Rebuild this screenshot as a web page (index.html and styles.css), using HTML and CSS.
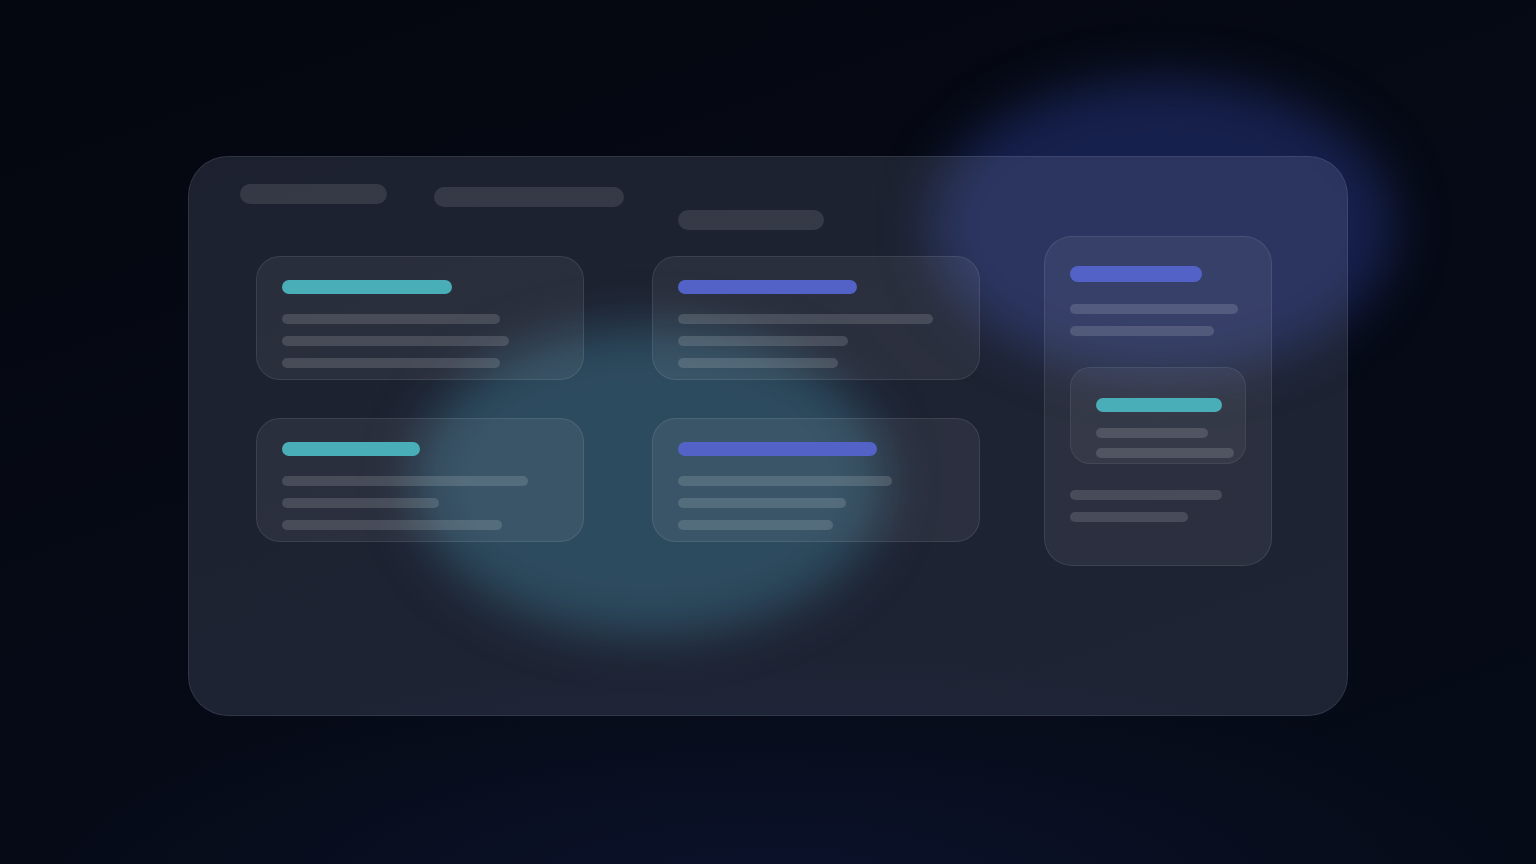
FILE: index.html
```html
<!DOCTYPE html>
<html lang="en">
<head>
<meta charset="utf-8">
<title>Dashboard skeleton</title>
<link rel="stylesheet" href="styles.css">
</head>
<body>
<main class="stage">
  <div class="blob blob-blue"></div>
  <div class="blob blob-teal"></div>
  <section class="panel">
    <header class="header">
      <span class="pill pill-a"></span>
      <span class="pill pill-b"></span>
      <span class="pill pill-c"></span>
    </header>
    <div class="body">
      <div class="grid">
        <article class="card">
          <span class="accent teal" style="width:170px"></span>
          <span class="line" style="width:218px"></span>
          <span class="line" style="width:227px"></span>
          <span class="line" style="width:218px"></span>
        </article>
        <article class="card">
          <span class="accent blue" style="width:179px"></span>
          <span class="line" style="width:255px"></span>
          <span class="line" style="width:170px"></span>
          <span class="line" style="width:160px"></span>
        </article>
        <article class="card">
          <span class="accent teal" style="width:138px"></span>
          <span class="line" style="width:246px"></span>
          <span class="line" style="width:157px"></span>
          <span class="line" style="width:220px"></span>
        </article>
        <article class="card">
          <span class="accent blue" style="width:199px"></span>
          <span class="line" style="width:214px"></span>
          <span class="line" style="width:168px"></span>
          <span class="line" style="width:155px"></span>
        </article>
      </div>
      <aside class="side">
        <span class="side-accent blue"></span>
        <span class="line" style="width:168px"></span>
        <span class="line" style="width:144px"></span>
        <div class="inner">
          <span class="accent teal" style="width:126px"></span>
          <span class="line" style="width:112px"></span>
          <span class="line" style="width:138px"></span>
        </div>
        <span class="line" style="width:152px"></span>
        <span class="line" style="width:118px"></span>
      </aside>
    </div>
  </section>
</main>
</body>
</html>
```
FILE: styles.css
```css
* { box-sizing: border-box; }
html, body { margin: 0; padding: 0; }
body {
  width: 1536px;
  height: 864px;
  overflow: hidden;
  font-family: "Inter", "Liberation Sans", sans-serif;
  background:
    radial-gradient(ellipse 760px 240px at 50% 104%, rgba(14, 22, 52, 0.7) 0%, rgba(14, 22, 52, 0) 100%),
    linear-gradient(160deg, #04070f 0%, #060a16 55%, #060b18 100%);
}
.stage {
  position: relative;
  width: 1536px;
  height: 864px;
  padding-top: 156px;
  display: flex;
  justify-content: center;
  align-items: flex-start;
}
.blob {
  position: absolute;
  border-radius: 50%;
  filter: blur(24px);
}
.blob-blue {
  left: 930px;
  top: 78px;
  width: 465px;
  height: 296px;
  background: rgb(22, 32, 76);
}
.blob-teal {
  left: 414px;
  top: 326px;
  width: 472px;
  height: 310px;
  background: rgb(24, 58, 74);
}
.panel {
  position: relative;
  width: 1160px;
  height: 560px;
  border-radius: 40px;
  border: 1px solid rgba(255, 255, 255, 0.09);
  background: rgba(150, 165, 200, 0.165);
  padding-top: 27px;
}
.header {
  display: flex;
  align-items: flex-start;
  margin-left: 51px;
  height: 46px;
}
.pill {
  display: block;
  flex-shrink: 0;
  height: 20px;
  border-radius: 10px;
  background: rgba(255, 255, 255, 0.11);
}
.pill-a { width: 147px; }
.pill-b { width: 190px; margin-left: 47px; margin-top: 3px; }
.pill-c { width: 146px; margin-left: 54px; margin-top: 26px; }
.body {
  display: flex;
  align-items: flex-start;
  margin-left: 67px;
  margin-top: 6px;
}
.grid {
  display: grid;
  grid-template-columns: 328px 328px;
  column-gap: 68px;
  row-gap: 38px;
  margin-top: 20px;
}
.card {
  height: 124px;
  border-radius: 24px;
  border: 1px solid rgba(255, 255, 255, 0.09);
  background: rgba(255, 255, 255, 0.06);
  padding: 23px 25px 0;
  display: flex;
  flex-direction: column;
  align-items: flex-start;
}
.accent {
  display: block;
  flex-shrink: 0;
  height: 14px;
  border-radius: 7px;
  margin-bottom: 20px;
}
.teal { background: #4aaeb8; }
.blue { background: #5262c6; }
.line {
  display: block;
  flex-shrink: 0;
  height: 10px;
  border-radius: 5px;
  background: rgba(255, 255, 255, 0.14);
  margin-bottom: 12px;
}
.side {
  width: 228px;
  height: 330px;
  flex-shrink: 0;
  margin-left: 64px;
  border-radius: 28px;
  border: 1px solid rgba(255, 255, 255, 0.09);
  background: rgba(255, 255, 255, 0.06);
  padding: 29px 25px 0;
  display: flex;
  flex-direction: column;
  align-items: flex-start;
}
.side-accent {
  display: block;
  flex-shrink: 0;
  width: 132px;
  height: 16px;
  border-radius: 8px;
  margin-bottom: 22px;
}
.inner {
  width: 176px;
  height: 97px;
  flex-shrink: 0;
  margin-top: 19px;
  margin-bottom: 26px;
  border-radius: 20px;
  border: 1px solid rgba(255, 255, 255, 0.07);
  background: rgba(255, 255, 255, 0.05);
  padding: 30px 25px 0;
  display: flex;
  flex-direction: column;
  align-items: flex-start;
}
.inner .accent { margin-bottom: 16px; }
.inner .line { margin-bottom: 10px; }
```
